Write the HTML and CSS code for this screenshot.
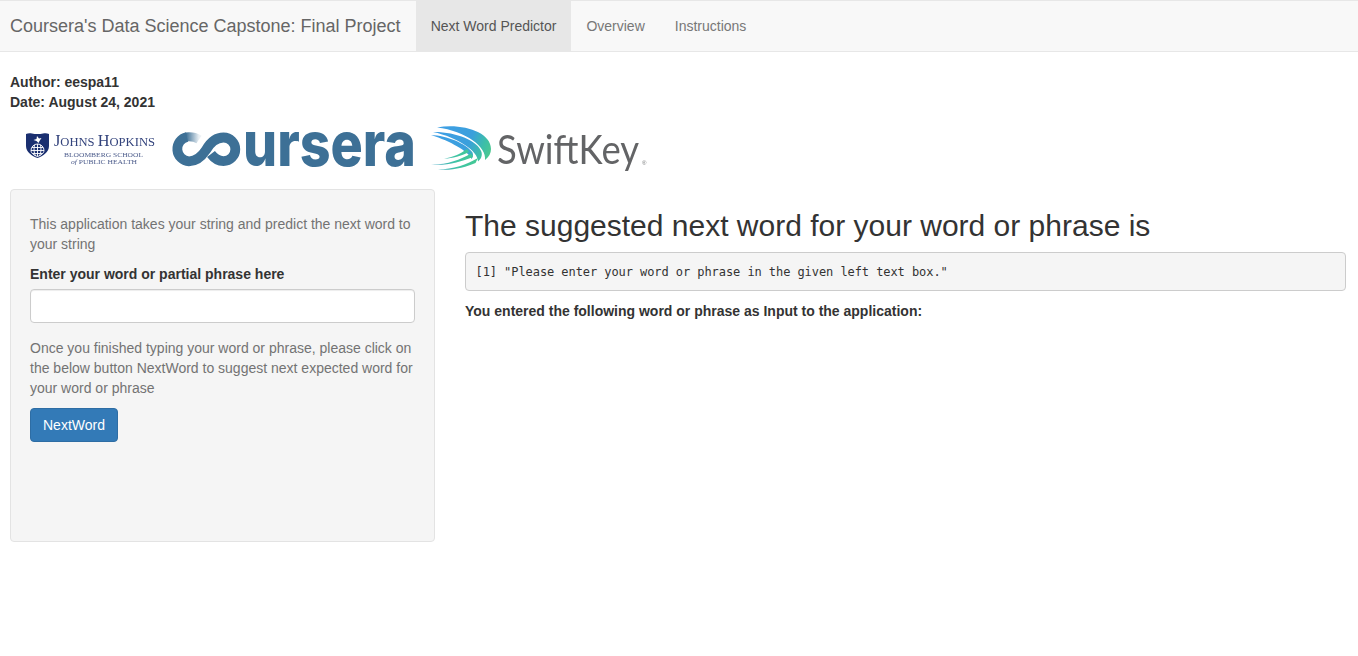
FILE: index.html
```html
<!DOCTYPE html>
<html lang="en">
<head>
<meta charset="utf-8">
<title>Coursera's Data Science Capstone: Final Project</title>
<link rel="stylesheet" href="styles.css">
</head>
<body>
<nav class="navbar">
  <span class="brand">Coursera's Data Science Capstone: Final Project</span>
  <ul class="tabs">
    <li class="tab active">Next Word Predictor</li>
    <li class="tab">Overview</li>
    <li class="tab">Instructions</li>
  </ul>
</nav>
<main class="page">
  <div class="meta">Author: eespa11</div>
  <div class="meta">Date: August 24, 2021</div>
  <div class="logos">
    <svg class="logo logo-jhu" viewBox="10 112 155 77" aria-label="Johns Hopkins Bloomberg School of Public Health">
      <path fill="#1a2f70" d="M26 134C28 133 30 133 32 133.500C35 134.300 40 134.300 43 133.500C45 133 47 133 49 134L49 146C49 152 43 156 37.500 158C32 156 26 152 26 146Z"/>
      <path fill="#fff" d="M37 136L39 138.500L41.500 138L39.500 141L38.500 143L36.500 141L33.500 140L36.500 139Z"/>
      <g fill="none" stroke="#fff" stroke-width="0.900">
        <path d="M31 150.500A6.500 6.500 0 0 1 44 150.500C44 153 41 155.500 37.500 156.500C34 155.500 31 153 31 150.500Z"/>
        <path d="M34.500 145C33.500 149 34 153 35.500 156M40.500 145C41.500 149 41 153 39.500 156M37.500 144V156.500M31 150.500H44M32 147.500H43M32.500 153.500H42.500"/>
      </g>
      <text class="jhu-main" x="54" y="146" textLength="101" lengthAdjust="spacingAndGlyphs"><tspan class="jhu-cap">J</tspan>OHNS <tspan class="jhu-cap">H</tspan>OPKINS</text>
      <text class="jhu-sub" x="64" y="156.500" textLength="79" lengthAdjust="spacingAndGlyphs">BLOOMBERG SCHOOL</text>
      <text class="jhu-sub" x="71" y="163.500" textLength="66" lengthAdjust="spacingAndGlyphs"><tspan class="jhu-of">of</tspan> PUBLIC HEALTH</text>
    </svg>
    <svg class="logo logo-coursera" viewBox="165 102 258 87" aria-label="Coursera">
      <defs>
        <linearGradient id="cfade" gradientUnits="userSpaceOnUse" x1="186" y1="137" x2="199" y2="137">
          <stop offset="0" stop-color="#3d7096"/>
          <stop offset="1" stop-color="#3d7096" stop-opacity="0.100"/>
        </linearGradient>
      </defs>
      <path class="c-stroke" d="M187 137A12.300 12.300 0 0 0 189 161.300C197 161.300 202 156 206 150C210 143 216 137.500 223.500 137.500A11.800 11.800 0 1 1 223.500 161.100C218 161 214 158 211 154"/>
      <path class="c-fade" d="M186 137C191 136.500 196 137.500 199 139.500"/>
      <text class="c-word" transform="translate(243 166) scale(1 1.200)" textLength="173" lengthAdjust="spacingAndGlyphs">ursera</text>
    </svg>
    <svg class="logo logo-swift" viewBox="423 112 232 77" aria-label="SwiftKey">
      <defs>
        <linearGradient id="sw1" gradientUnits="userSpaceOnUse" x1="431" y1="130" x2="490" y2="155">
          <stop offset="0" stop-color="#3f9fe6"/>
          <stop offset="0.620" stop-color="#3a9fdc"/>
          <stop offset="0.850" stop-color="#3dbfa8"/>
          <stop offset="1" stop-color="#4cc98f"/>
        </linearGradient>
        <linearGradient id="sw2" gradientUnits="userSpaceOnUse" x1="431" y1="168" x2="480" y2="148">
          <stop offset="0" stop-color="#4aa8c8"/>
          <stop offset="0.500" stop-color="#3fc4a4"/>
          <stop offset="1" stop-color="#45c98c"/>
        </linearGradient>
      </defs>
      <path fill="url(#sw1)" d="M437 127.500C462 123 491 132 491 149C491 153 489 157 485 160C487 147 466 131 437 127.500Z"/>
      <path fill="url(#sw1)" d="M433 132C455 131.500 478 140.500 481.500 152C482.500 156 481 159 478 161.500C478 151 458 137.500 433 132Z"/>
      <path fill="url(#sw1)" d="M431 135C447 135.500 466 143.500 472.500 152.500C473.500 155 473 157 471.500 159C468 151 451 141.500 431 135Z"/>
      <path fill="url(#sw2)" d="M444 158.500C453 157.500 460 154 467 149L469 152C461 156 453 158.500 444 158.500Z"/>
      <path fill="url(#sw2)" d="M431 164.500C446 165 460 160 471 153.500L473 157C461 162 446 166 431 164.500Z"/>
      <path fill="url(#sw2)" d="M438 169.500C453 169.500 467 164.500 478 158L475.500 163C466 167 452 171 438 169.500Z"/>
      <text class="sk-word" transform="translate(497 163.500) scale(1 1.170)" textLength="142" lengthAdjust="spacingAndGlyphs">SwiftKey</text>
      <text class="sk-reg" x="642" y="165">®</text>
    </svg>
  </div>
  <div class="layout">
    <aside class="panel">
      <p class="help">This application takes your string and predict the next word to your string</p>
      <label class="field-label" for="phrase">Enter your word or partial phrase here</label>
      <input class="field" id="phrase" type="text">
      <p class="help">Once you finished typing your word or phrase, please click on the below button NextWord to suggest next expected word for your word or phrase</p>
      <button class="btn" type="button">NextWord</button>
    </aside>
    <section class="result">
      <h2 class="result-title">The suggested next word for your word or phrase is</h2>
      <pre class="output">[1] "Please enter your word or phrase in the given left text box."</pre>
      <div class="result-note">You entered the following word or phrase as Input to the application:</div>
    </section>
  </div>
</main>
</body>
</html>
```

FILE: styles.css
```css
* {
  box-sizing: border-box;
}

body {
  margin: 0;
  background: #fff;
  color: #333;
  font-family: "Liberation Sans", Arial, sans-serif;
  font-size: 14px;
  line-height: 20px;
}

.navbar {
  display: flex;
  height: 52px;
  margin-bottom: 20px;
  padding-left: 10px;
  background: #f8f8f8;
  border-top: 1px solid #e7e7e7;
  border-bottom: 1px solid #e7e7e7;
}

.brand {
  padding-right: 15px;
  color: #666;
  font-size: 18px;
  line-height: 50px;
}

.tabs {
  display: flex;
  margin: 0;
  padding: 0;
  list-style: none;
}

.tab {
  padding: 15px;
  color: #777;
}

.tab.active {
  background: #e7e7e7;
  color: #555;
}

.page {
  padding: 0 12px 0 10px;
}

.meta {
  font-weight: 700;
}

.logos {
  display: flex;
  height: 77px;
}

.logo {
  display: block;
  height: 77px;
  flex: none;
  filter: blur(0.4px);
}

.logo-jhu {
  width: 155px;
}

.logo-coursera {
  width: 258px;
  height: 87px;
  margin-top: -10px;
}

.logo-swift {
  width: 232px;
}

.jhu-main {
  fill: #33437c;
  font-family: "Liberation Serif", serif;
  font-size: 13.500px;
}

.jhu-cap {
  font-size: 17.500px;
}

.jhu-sub {
  fill: #4a5a8a;
  font-family: "Liberation Serif", serif;
  font-size: 7px;
}

.jhu-of {
  font-style: italic;
}

.c-stroke {
  fill: none;
  stroke: #3d7096;
  stroke-width: 9.800px;
}

.c-fade {
  fill: none;
  stroke: url(#cfade);
  stroke-width: 9px;
}

.c-word {
  fill: #3d7096;
  font-family: Inter, sans-serif;
  font-size: 52px;
  font-weight: 800;
}

.sk-word {
  fill: #636466;
  font-family: Lato, sans-serif;
  font-size: 35px;
  font-weight: 400;
}

.sk-reg {
  fill: #77787a;
  font-family: "Liberation Sans", sans-serif;
  font-size: 6px;
}

.layout {
  display: grid;
  grid-template-columns: 425px 1fr;
  column-gap: 30px;
  align-items: start;
}

.panel {
  min-height: 353px;
  padding: 24px 19px 19px;
  background: #f5f5f5;
  border: 1px solid #e3e3e3;
  border-radius: 4px;
}

.help {
  margin: 0 0 10px;
  color: #737373;
}

.field-label {
  display: block;
  margin-bottom: 5px;
  font-weight: 700;
}

.field {
  display: block;
  width: 100%;
  height: 34px;
  margin-bottom: 15px;
  padding: 6px 12px;
  background: #fff;
  border: 1px solid #ccc;
  border-radius: 4px;
  box-shadow: inset 0 1px 1px rgba(0, 0, 0, 0.075);
}

.btn {
  display: block;
  height: 34px;
  padding: 6px 12px;
  background: #337ab7;
  border: 1px solid #2e6da4;
  border-radius: 4px;
  color: #fff;
  font-family: inherit;
  font-size: 14px;
  line-height: 20px;
}

.result-title {
  margin: 20px 0 10px;
  font-size: 30px;
  font-weight: 400;
  line-height: 33px;
}

.output {
  margin: 0 0 10px;
  padding: 9.500px;
  background: #f5f5f5;
  border: 1px solid #ccc;
  border-radius: 4px;
  font-family: "DejaVu Sans Mono", "Liberation Mono", monospace;
  font-size: 12px;
  letter-spacing: -0.070px;
  line-height: 18px;
}

.result-note {
  font-weight: 700;
}
```
